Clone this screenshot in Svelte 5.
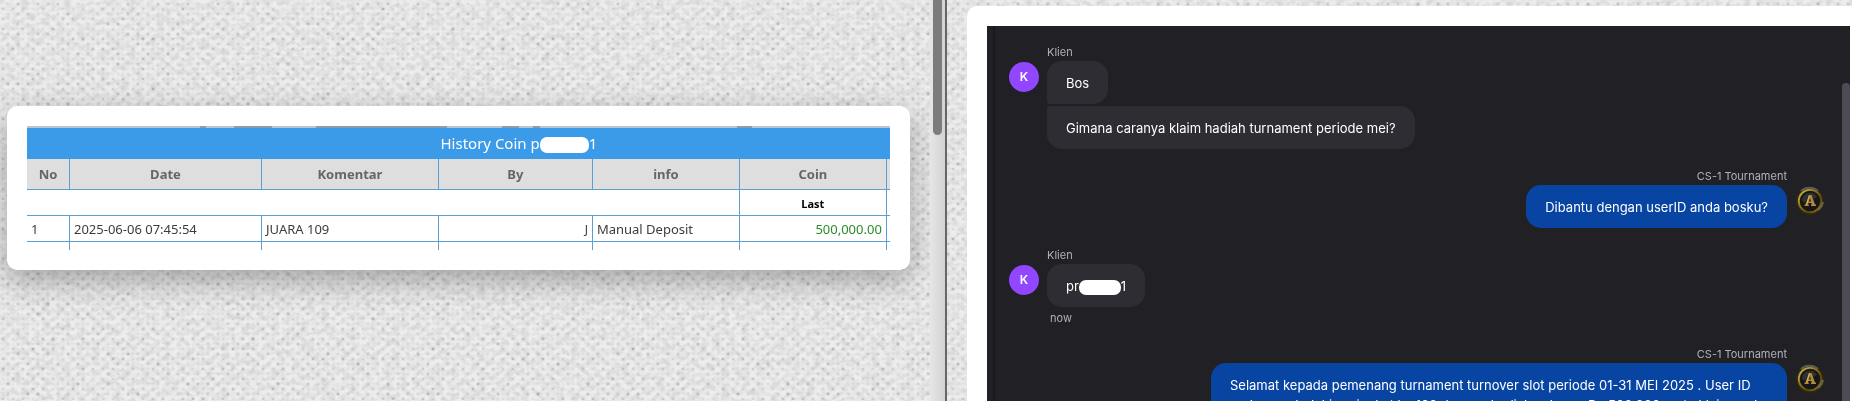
<script>
  const columns = [
    { name: 'No', share: 4.98 },
    { name: 'Date', share: 22.25 },
    { name: 'Komentar', share: 20.5 },
    { name: 'By', share: 17.85 },
    { name: 'info', share: 17.03 },
    { name: 'Coin', share: 17.03 }
  ];

  const groups = [
    { from: 'Klien', own: false, texts: ['Bos', 'Gimana caranya klaim hadiah turnament periode mei?'] },
    { from: 'CS-1 Tournament', own: true, texts: ['Dibantu dengan userID anda bosku?'] },
    { from: 'Klien', own: false, masked: ['pr', '1'], texts: [], time: 'now' },
    {
      from: 'CS-1 Tournament',
      own: true,
      texts: ['Selamat kepada pemenang turnament turnover slot periode 01-31 MEI 2025 . User ID anda menduduki peringkat ke 109 dengan hadiah sebesar Rp 500.000 serta klaim anda']
    }
  ];

  // Woven paper: a staggered grid of pinholes with uneven strength.
  const tile = 200;
  const dots = [];
  let seed = 17;
  const random = () => (seed = (seed * 16807) % 2147483647) / 2147483647;
  for (let row = 0; row < tile / 5; row++) {
    for (let col = 0; col < tile / 10; col++) {
      dots.push({
        x: col * 10 + (row % 2 ? 3 : 8),
        y: row * 5 + 4,
        strength: 0.04 + random() * random() * 0.14
      });
    }
  }
</script>

{#snippet crest()}
  <svg class="avatar" viewBox="0 0 30 30" aria-hidden="true">
    <defs>
      <linearGradient id="gold" x1="0" y1="0" x2="1" y2="1">
        <stop offset="0" stop-color="#d9c44c" />
        <stop offset=".4" stop-color="#8f7419" />
        <stop offset=".7" stop-color="#5c4709" />
        <stop offset="1" stop-color="#a58a2c" />
      </linearGradient>
      <radialGradient id="halo">
        <stop offset=".7" stop-color="#4b400c" />
        <stop offset=".9" stop-color="#30290f" />
        <stop offset="1" stop-color="#211f20" />
      </radialGradient>
    </defs>
    <circle cx="15" cy="15" r="14.5" fill="url(#halo)" />
    <path d="M6 5a13 13 0 0 1 17 0M23 24a13 13 0 0 0 5-8" fill="none" stroke="#5c5d56" stroke-width="2" />
    <circle cx="15" cy="15" r="11.2" fill="#171619" stroke="url(#gold)" stroke-width="1.8" />
    <path d="M7 15a8 8 0 0 1 15-4l-4 2-3-5-5 9z" fill="#303131" />
    <path d="M9.500 20v-1.500h1L14 9h2.500L20 18.500h1V20h-5v-1.500h.8l-.4-1.500h-3l-.4 1.500h.8V20zM14 15.500h2l-1-3.500z" fill="#b08a3a" fill-rule="evenodd" />
    <path d="M14.500 9l-3 9.500" stroke="#dcc070" stroke-width=".8" fill="none" />
  </svg>
{/snippet}

<svg class="paper" aria-hidden="true">
  <defs>
    <pattern id="weave" width={tile} height={tile} patternUnits="userSpaceOnUse">
      {#each dots as dot}
        <circle cx={dot.x} cy={dot.y} r="2" fill="#000" opacity={dot.strength * 0.5} />
        <circle cx={dot.x} cy={dot.y} r="1" fill="#000" opacity={dot.strength} />
      {/each}
    </pattern>
    <filter id="fibre" x="0" y="0" width="100%" height="100%">
      <feTurbulence type="fractalNoise" baseFrequency=".14 .2" numOctaves="2" seed="4" />
      <feColorMatrix values="0 0 0 0 0  0 0 0 0 0  0 0 0 0 0  .2 0 0 0 -.07" />
    </filter>
  </defs>
  <rect width="100%" height="100%" fill="#ededed" />
  <rect width="100%" height="100%" filter="url(#fibre)" />
  <rect width="100%" height="100%" fill="url(#weave)" />
</svg>

<main>
  <section class="history">
    <div class="stage">
      <div class="card">
        <table>
          <caption>History Coin p<span class="mask"></span>1</caption>
          <colgroup>
            {#each columns as column}
              <col style:width="{column.share}%" />
            {/each}
            <col />
          </colgroup>
          <thead>
            <tr>
              {#each columns as column}
                <th scope="col">{column.name}</th>
              {/each}
              <th></th>
            </tr>
          </thead>
          <tbody>
            <tr class="sub"><td colspan="5"></td><th scope="col">Last</th><td></td></tr>
            <tr>
              <td>1</td>
              <td>2025-06-06 07:45:54</td>
              <td>JUARA 109</td>
              <td class="right small">J</td>
              <td>Manual Deposit</td>
              <td class="right coin">500,000.00</td>
              <td></td>
            </tr>
            <tr class="next"><td></td><td></td><td></td><td></td><td></td><td></td><td></td></tr>
          </tbody>
        </table>
      </div>
    </div>
    <div class="track"><div class="thumb"></div></div>
  </section>

  <section class="support">
    <div class="frame">
      <div class="chat">
        <div class="messages">
          {#each groups as group}
            <article class:own={group.own}>
              {#if group.own}
                {@render crest()}
              {:else}
                <span class="avatar initial">K</span>
              {/if}
              <div class="stack">
                <span class="meta">{group.from}</span>
                {#each group.texts as text}
                  <p class="bubble">{text}</p>
                {/each}
                {#if group.masked}
                  <p class="bubble">{group.masked[0]}<span class="mask"></span>{group.masked[1]}</p>
                {/if}
                {#if group.time}
                  <span class="meta time">{group.time}</span>
                {/if}
              </div>
            </article>
          {/each}
        </div>
        <div class="rail"></div>
      </div>
    </div>
  </section>
</main>

<style>
  :global(body) {
    margin: 0;
    background: #e6e6e6;
  }
  .paper {
    position: fixed;
    inset: 0;
    width: 100%;
    height: 100%;
    z-index: -1;
  }
  main {
    display: grid;
    grid-template-columns: 947fr 905fr;
    height: 100vh;
    overflow: hidden;
  }
  .history {
    display: flex;
    min-width: 0;
    border-right: 2px solid #676767;
  }
  .stage {
    flex: 1;
    min-width: 0;
    padding: 106px 20px 0 7px;
  }
  .card {
    padding: 20px;
    border-radius: 10px;
    background: #fff;
    box-shadow: 0 10px 30px rgb(0 0 0 / 30%);
  }
  .track {
    width: 15px;
    display: flex;
    justify-content: center;
    background: linear-gradient(90deg, #e6e6e6, #d2d2d2);
  }
  .thumb {
    width: 9px;
    height: 135px;
    border-radius: 0 0 5px 5px;
    background: #7c7c7c;
  }
  table {
    width: 100%;
    table-layout: fixed;
    border-collapse: separate;
    border-spacing: 0;
    font: 13px/23px "Noto Sans", sans-serif;
    color: #3c3c3c;
  }
  caption {
    height: 31px;
    padding: 2px 0 0 14%;
    background:
      linear-gradient(
          90deg,
          #b9c6d2 20%,
          #8f9aab 20% 20.7%,
          #b9c6d2 20.7% 24%,
          #8f9aab 24% 28.4%,
          #b9c6d2 28.4% 33.5%,
          #8f9aab 33.5% 48.7%,
          #b9c6d2 48.7% 55%,
          #8f9aab 55% 57%,
          #b9c6d2 57% 58.6%,
          #8f9aab 58.6% 59.4%,
          #b9c6d2 59.4% 82.3%,
          #8f9aab 82.3% 84%,
          #b9c6d2 84%
        )
        0 0 / 100% 2px no-repeat,
      #3b9be9;
    color: #fff;
    font-size: 15px;
    line-height: 31px;
  }
  .mask {
    display: inline-block;
    width: 49px;
    height: 16px;
    border-radius: 7px;
    background: #fff;
    vertical-align: middle;
  }
  th,
  td {
    box-sizing: border-box;
    padding: 0 4px;
    border-right: 1px solid #5a9fd3;
    border-bottom: 1px solid #5a9fd3;
    text-align: left;
    white-space: nowrap;
  }
  tbody th,
  tbody td {
    padding-top: 2px;
  }
  th:last-child,
  td:last-child {
    padding: 0;
    border-right: 0;
  }
  thead th {
    height: 31px;
    background: #dedede;
    color: #666;
    text-align: center;
  }
  tbody tr {
    height: 26px;
  }
  .sub th {
    color: #000;
    font-size: 11px;
    text-align: center;
  }
  .right {
    text-align: right;
  }
  .small {
    font-size: 12px;
  }
  .coin {
    color: #2c8a2c;
  }
  .next {
    height: 8px;
  }
  .next td {
    border-bottom: 0;
  }
  .support {
    min-width: 0;
    padding: 6px 0 0 20px;
  }
  .frame {
    box-sizing: border-box;
    height: 100%;
    padding: 20px 2px 0 20px;
    border-radius: 10px 0 0 0;
    background: #fff;
  }
  .chat {
    display: flex;
    height: 100%;
    overflow: hidden;
    background: linear-gradient(#19181c, #19181c) 6px 0 / 2px 100% no-repeat #212025;
    font: 13px/20px Inter, sans-serif;
    color: #fff;
  }
  .messages {
    flex: 1;
    min-width: 0;
    display: flex;
    flex-direction: column;
    gap: 18px;
    padding: 17px 17px 0 22px;
  }
  .rail {
    width: 8px;
    flex: none;
    margin-top: 57px;
    border-radius: 4px 4px 0 0;
    background: #4d4c56;
  }
  article {
    display: flex;
    flex: none;
    align-items: flex-start;
    gap: 8px;
  }
  .own {
    flex-direction: row-reverse;
  }
  .avatar {
    flex: none;
    width: 30px;
    height: 30px;
    margin-top: 19px;
    border-radius: 50%;
  }
  .initial {
    background: #9146ff;
    color: #fff;
    font-size: 12px;
    font-weight: 600;
    line-height: 30px;
    text-align: center;
  }
  .stack {
    display: flex;
    flex-direction: column;
    align-items: flex-start;
    gap: 2px;
    max-width: 576px;
  }
  .own .stack {
    align-items: flex-end;
  }
  .meta {
    margin-bottom: -2px;
    color: #b1b0b6;
    font-size: 11px;
    line-height: 18px;
  }
  .time {
    margin: 0 0 0 3px;
  }
  .bubble {
    margin: 0;
    padding: 12px 19px 11px;
    border-radius: 15px;
    background: #2e2d33;
  }
  .bubble:has(+ .bubble) {
    border-bottom-left-radius: 3px;
  }
  .bubble + .bubble {
    border-top-left-radius: 3px;
  }
  .own .bubble {
    background: #0845a3;
  }
  .bubble .mask {
    width: 42px;
    height: 15px;
  }
</style>
